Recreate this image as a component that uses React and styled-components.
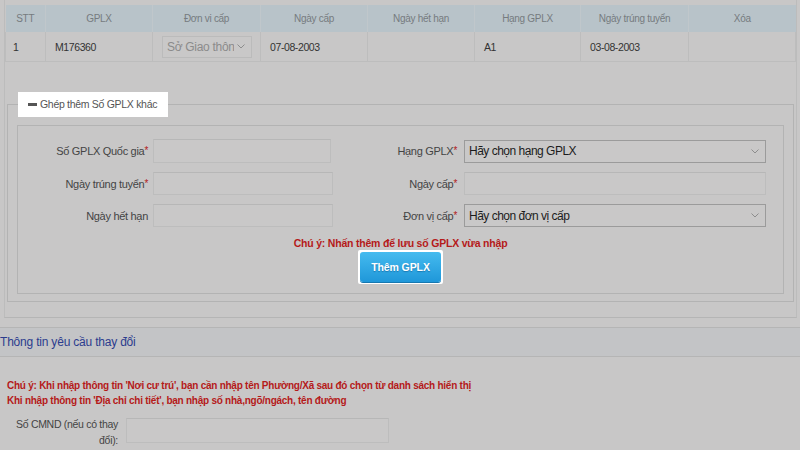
import React from "react";
import styled, { createGlobalStyle } from "styled-components";

const FONT = `"Liberation Sans", Arial, sans-serif`;

const Global = createGlobalStyle`
  html, body { margin: 0; padding: 0; background: #c8c7c7; }
  body { font-family: ${FONT}; width: 800px; height: 450px; overflow: hidden; }
`;

const Page = styled.div`
  width: 800px;
  height: 450px;
  background: #c8c7c7;
  overflow: hidden;
`;

const TopPanel = styled.div`
  margin: 0 3px 0 4px;
  padding-top: 5px;
  padding-bottom: 15px;
  border-left: 1px solid #bcbcbc;
  border-right: 1px solid #bcbcbc;
  border-bottom: 1px solid #b5b5b5;
`;

const Table = styled.table`
  width: 790px;
  border-collapse: collapse;
  table-layout: fixed;
`;

const Th = styled.th`
  height: 27px;
  padding: 0;
  background: #b8c3c9;
  color: #767b7f;
  font-weight: normal;
  font-size: 10px;
  letter-spacing: -0.3px;
  text-align: center;
  border-left: 1px solid #c0c7cb;
  &:first-child { border-left: none; }
`;

const Td = styled.td`
  height: 29px;
  padding: 0 0 0 9px;
  color: #333;
  font-size: 10.5px;
  letter-spacing: -0.4px;
  border: 1px solid #bdbdbd;
  border-top: none;
  white-space: nowrap;
  overflow: hidden;
`;

const SelectBox = styled.div`
  box-sizing: border-box;
  display: flex;
  align-items: center;
  justify-content: space-between;
  width: ${(p) => p.$w || "100%"};
  height: ${(p) => p.$h || "23px"};
  border: 1px solid ${(p) => (p.$muted ? "#bbbbbb" : "#9b9b9b")};
  background: #c9c8c8;
  padding: 0 6px 0 4px;
  font-size: 12px;
  letter-spacing: ${(p) => (p.$muted ? "-0.3px" : "-0.5px")};
  color: ${(p) => (p.$muted ? "#8b8b8b" : "#1c1c1c")};
  overflow: hidden;
`;

const SelectText = styled.span`
  white-space: nowrap;
  overflow: hidden;
  flex: 1;
`;

const Chevron = () => (
  <svg width="8" height="5" viewBox="0 0 8 5" style={{ flex: "none", marginLeft: 3 }}>
    <path d="M0.5 0.5 L4 4 L7.5 0.5" fill="none" stroke="#8d8d8d" strokeWidth="1" />
  </svg>
);

const Select = ({ children, ...rest }) => (
  <SelectBox {...rest}>
    <SelectText>{children}</SelectText>
    <Chevron />
  </SelectBox>
);

const FieldSet = styled.fieldset`
  margin: 30px 2px 0 2px;
  padding: 8px 9px 7px 9px;
  border: 1px solid #b3b3b3;
  min-width: 0;
`;

const Legend = styled.legend`
  box-sizing: border-box;
  background: #ffffff;
  padding: 0 0 0 10px;
  height: 25px;
  line-height: 25px;
  width: 150px;
  margin-left: 1px;
  font-size: 10.5px;
  letter-spacing: -0.3px;
  color: #555;
  white-space: nowrap;
`;

const Dash = styled.span`
  display: inline-block;
  width: 9px;
  height: 3px;
  background: #555;
  vertical-align: middle;
  margin-right: 3px;
  margin-top: -2px;
`;

const InnerBox = styled.div`
  border: 1px solid #b3b3b3;
  padding: 13px 0 9px 0;
`;

const FormGrid = styled.div`
  display: grid;
  grid-template-columns: 135px 180px 131px 302px;
  row-gap: 9px;
  align-items: center;
`;

const Label = styled.label`
  text-align: right;
  padding-right: ${(p) => p.$pr || 5}px;
  font-size: 11px;
  letter-spacing: -0.3px;
  color: #444;
  white-space: nowrap;
`;

const Star = styled.span`
  color: #b32020;
  font-size: 10px;
  vertical-align: top;
`;

const Input = styled.div`
  box-sizing: border-box;
  width: ${(p) => p.$w || "100%"};
  height: ${(p) => p.$h || "23px"};
  border: 1px solid #bdbdbd;
  border-top-color: #b7b7b7;
  background: #c9c8c8;
`;

const Note = styled.div`
  text-align: center;
  color: #b51a1a;
  font-weight: bold;
  font-size: 10.5px;
  letter-spacing: -0.2px;
  margin-top: 9px;
  line-height: 14px;
`;

const ButtonRow = styled.div`
  display: flex;
  justify-content: center;
`;

const ButtonFrame = styled.div`
  background: #ffffff;
  padding: 2px;
  border-radius: 2px;
`;

const Button = styled.button`
  width: 81px;
  height: 30px;
  border: none;
  border-radius: 3px;
  background: linear-gradient(#45bbef, #1f97d9);
  color: #fff;
  font-family: ${FONT};
  font-weight: bold;
  font-size: 10.5px;
  letter-spacing: -0.1px;
  text-shadow: 0 1px 1px rgba(0, 60, 110, 0.4);
  box-shadow: 0 1px 0 #1677b0;
  cursor: pointer;
`;

const SectionHead = styled.div`
  margin-top: 9px;
  border-top: 1px solid #b5b5b5;
  border-bottom: 1px solid #b5b5b5;
  background: #c3c4c6;
  height: 28px;
  display: flex;
  align-items: center;
  font-size: 12px;
  letter-spacing: -0.2px;
  color: #2c3c8e;
`;

const SectionBody = styled.div`
  padding: 21px 8px 0 7px;
`;

const Warn = styled.div`
  color: #b51a1a;
  font-weight: bold;
  font-size: 10px;
  letter-spacing: -0.25px;
  line-height: 15px;
`;

const CmndRow = styled.div`
  display: flex;
  align-items: flex-start;
  margin-top: 10px;
  margin-left: -7px;
`;

const CmndLabel = styled.div`
  width: 118px;
  text-align: right;
  font-size: 10.5px;
  letter-spacing: -0.3px;
  color: #444;
  line-height: 16px;
  margin-top: -2px;
`;

const columns = [40, 107, 108, 107, 107, 106, 108, 107];
const heads = ["STT", "GPLX", "Đơn vi cấp", "Ngày cấp", "Ngày hết hạn", "Hạng GPLX", "Ngày trúng tuyển", "Xóa"];

export default function App() {
  return (
    <Page>
      <Global />
      <TopPanel>
        <Table>
          <colgroup>
            {columns.map((w, i) => (
              <col key={i} style={{ width: w }} />
            ))}
          </colgroup>
          <thead>
            <tr>
              {heads.map((h) => (
                <Th key={h}>{h}</Th>
              ))}
            </tr>
          </thead>
          <tbody>
            <tr>
              <Td style={{ paddingLeft: 7 }}>1</Td>
              <Td>M176360</Td>
              <Td>
                <Select $muted $w="90px" $h="22px">Sở Giao thông vận tải</Select>
              </Td>
              <Td>07-08-2003</Td>
              <Td></Td>
              <Td>A1</Td>
              <Td>03-08-2003</Td>
              <Td></Td>
            </tr>
          </tbody>
        </Table>

        <FieldSet>
          <Legend>
            <Dash />
            Ghép thêm Số GPLX khác
          </Legend>
          <InnerBox>
            <FormGrid>
              <Label>
                Số GPLX Quốc gia<Star>*</Star>
              </Label>
              <Input $w="178px" $h="24px" />
              <Label $pr={7}>
                Hạng GPLX<Star>*</Star>
              </Label>
              <Select>Hãy chọn hạng GPLX</Select>

              <Label>
                Ngày trúng tuyển<Star>*</Star>
              </Label>
              <Input />
              <Label $pr={7}>
                Ngày cấp<Star>*</Star>
              </Label>
              <Input />

              <Label>Ngày hết hạn</Label>
              <Input />
              <Label $pr={7}>
                Đơn vị cấp<Star>*</Star>
              </Label>
              <Select>Hãy chọn đơn vị cấp</Select>
            </FormGrid>
            <Note>Chú ý: Nhấn thêm để lưu số GPLX vừa nhập</Note>
            <ButtonRow>
              <ButtonFrame>
                <Button>Thêm GPLX</Button>
              </ButtonFrame>
            </ButtonRow>
          </InnerBox>
        </FieldSet>
      </TopPanel>

      <SectionHead>Thông tin yêu cầu thay đổi</SectionHead>
      <SectionBody>
        <Warn>Chú ý: Khi nhập thông tin 'Nơi cư trú', bạn cần nhập tên Phường/Xã sau đó chọn từ danh sách hiển thị</Warn>
        <Warn>Khi nhập thông tin 'Địa chỉ chi tiết', bạn nhập số nhà,ngõ/ngách, tên đường</Warn>
        <CmndRow>
          <CmndLabel>
            Số CMND (nếu có thay
            <br />
            đổi):
          </CmndLabel>
          <Input $w="263px" $h="25px" style={{ marginLeft: 8 }} />
        </CmndRow>
      </SectionBody>
    </Page>
  );
}
